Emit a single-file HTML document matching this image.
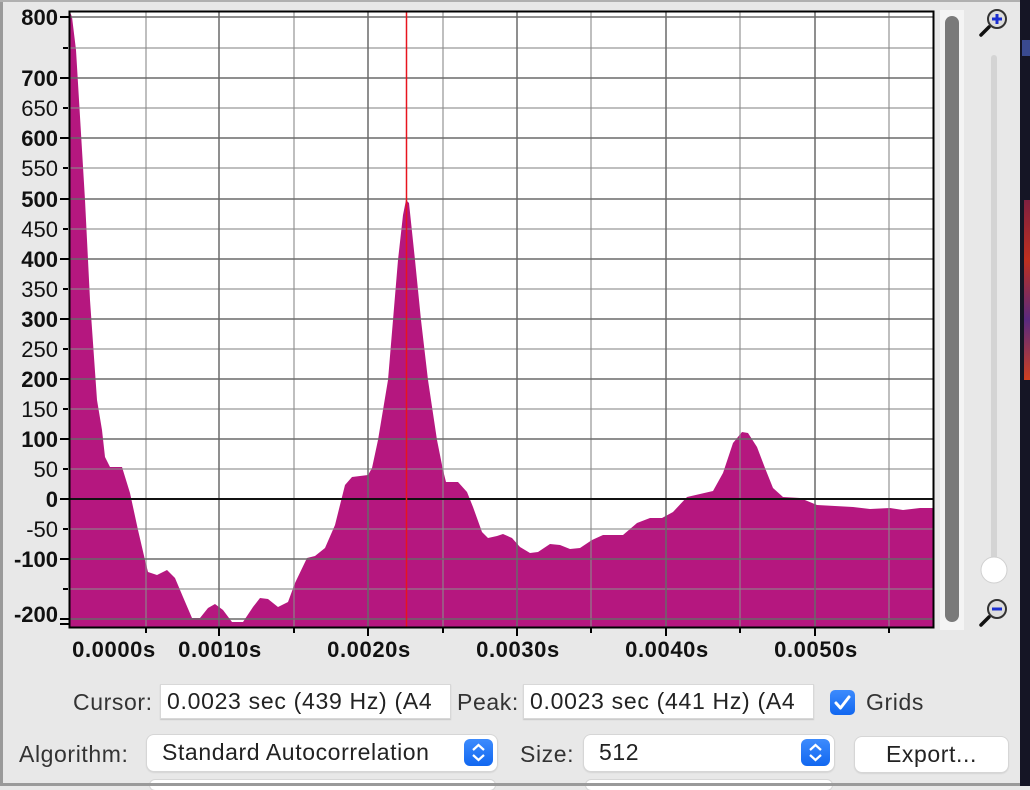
<!DOCTYPE html>
<html><head><meta charset="utf-8"><style>
html,body{margin:0;padding:0;}
body{width:1030px;height:786px;background:#e8e8e8;position:relative;overflow:hidden;font-family:"Liberation Sans",Arial,sans-serif;color:#222;}
.abs{position:absolute;}
.lab{font-size:23px;letter-spacing:0.6px;color:#333;}
.field{background:#fff;border:1px solid #d8d8d8;box-shadow:0 1px 1px rgba(0,0,0,.15);font-size:23px;letter-spacing:0.7px;color:#222;line-height:33px;padding-left:6px;box-sizing:border-box;white-space:nowrap;overflow:hidden;}
.pop{background:#fff;border-radius:7px;box-shadow:0 0 0 1px #d6d6d6,0 1px 2px rgba(0,0,0,.2);font-size:23px;letter-spacing:0.6px;line-height:34px;padding-left:15px;box-sizing:border-box;}
.stp{position:absolute;right:4px;top:4px;width:29px;height:27px;border-radius:6px;background:linear-gradient(#3d8bfd,#1167f0);}
</style></head><body>
<div class="abs" style="left:0;top:0;width:3px;height:786px;background:#9a9a9a"></div>
<div class="abs" style="left:0;top:0;width:1030px;height:2px;background:#b0b0b0"></div>
<div class="abs" style="left:1020px;top:0;width:10px;height:786px;background:#151525"></div>
<div class="abs" style="left:1022px;top:40px;width:8px;height:16px;background:#3a4a90"></div>
<div class="abs" style="left:1024px;top:200px;width:6px;height:180px;background:linear-gradient(#802040,#c03020,#5a2a80,#d04020)"></div>
<svg class="abs" style="left:0;top:0" width="1020" height="786">
<rect x="70" y="12" width="863" height="615" fill="#fff"/>
<polygon fill="#b5177f" points="70,12 72,17 76,50 79,100 82,150 85,200 90,300 97,400 102,430 105,457 110,467 122,467 130,493 138,530 145,560 148,572 157,575 167,570 175,578 183,597 192,618 200,618 208,608 215,604 223,610 232,622 243,622 253,607 260,598 268,599 278,607 288,602 295,583 307,558 315,556 325,548 335,525 345,485 352,477 368,475 372,468 378,440 383,410 388,380 393,320 398,260 403,215 406,200 409,203 415,260 421,320 428,380 437,440 443,470 446,482 458,482 467,492 473,507 482,532 488,538 497,536 503,534 512,538 520,547 530,553 538,552 550,544 560,545 570,549 580,548 592,540 603,535 623,535 637,523 650,518 662,518 673,512 687,497 700,494 713,491 723,473 733,443 742,432 748,433 757,447 765,468 773,488 783,497 800,498 817,505 853,507 870,509 890,508 903,510 920,508 933,508 933,627 70,627"/>
<g stroke="#8a8a8a" stroke-opacity="0.55" stroke-width="2">
<line x1="70" y1="48" x2="933" y2="48"/><line x1="70" y1="108" x2="933" y2="108"/><line x1="70" y1="168" x2="933" y2="168"/><line x1="70" y1="229" x2="933" y2="229"/><line x1="70" y1="289" x2="933" y2="289"/><line x1="70" y1="349" x2="933" y2="349"/><line x1="70" y1="409" x2="933" y2="409"/><line x1="70" y1="469" x2="933" y2="469"/><line x1="70" y1="529" x2="933" y2="529"/><line x1="70" y1="589" x2="933" y2="589"/>
<line x1="146" y1="12" x2="146" y2="627"/><line x1="294" y1="12" x2="294" y2="627"/><line x1="443" y1="12" x2="443" y2="627"/><line x1="591" y1="12" x2="591" y2="627"/><line x1="740" y1="12" x2="740" y2="627"/><line x1="889" y1="12" x2="889" y2="627"/>
</g>
<g stroke="#6a6a6a" stroke-opacity="0.75" stroke-width="2">
<line x1="70" y1="17" x2="933" y2="17"/><line x1="70" y1="78" x2="933" y2="78"/><line x1="70" y1="138" x2="933" y2="138"/><line x1="70" y1="199" x2="933" y2="199"/><line x1="70" y1="259" x2="933" y2="259"/><line x1="70" y1="319" x2="933" y2="319"/><line x1="70" y1="379" x2="933" y2="379"/><line x1="70" y1="439" x2="933" y2="439"/><line x1="70" y1="559" x2="933" y2="559"/><line x1="70" y1="619" x2="933" y2="619"/>
<line x1="219" y1="12" x2="219" y2="627"/><line x1="368" y1="12" x2="368" y2="627"/><line x1="517" y1="12" x2="517" y2="627"/><line x1="666" y1="12" x2="666" y2="627"/><line x1="815" y1="12" x2="815" y2="627"/>
</g>
<line x1="70" y1="499" x2="933" y2="499" stroke="#111" stroke-width="2"/>
<line x1="406.5" y1="12" x2="406.5" y2="627" stroke="#e8141e" stroke-width="1.5"/>
<rect x="69.5" y="11.5" width="864" height="616" fill="none" stroke="#000" stroke-width="2"/>
<g stroke="#000" stroke-width="2">
<line x1="60" y1="17" x2="69" y2="17"/><line x1="63" y1="48" x2="68" y2="48"/><line x1="60" y1="78" x2="69" y2="78"/><line x1="63" y1="108" x2="68" y2="108"/><line x1="60" y1="138" x2="69" y2="138"/><line x1="63" y1="168" x2="68" y2="168"/><line x1="60" y1="199" x2="69" y2="199"/><line x1="63" y1="229" x2="68" y2="229"/><line x1="60" y1="259" x2="69" y2="259"/><line x1="63" y1="289" x2="68" y2="289"/><line x1="60" y1="319" x2="69" y2="319"/><line x1="63" y1="349" x2="68" y2="349"/><line x1="60" y1="379" x2="69" y2="379"/><line x1="63" y1="409" x2="68" y2="409"/><line x1="60" y1="439" x2="69" y2="439"/><line x1="63" y1="469" x2="68" y2="469"/><line x1="60" y1="499" x2="69" y2="499"/><line x1="63" y1="529" x2="68" y2="529"/><line x1="60" y1="559" x2="69" y2="559"/><line x1="63" y1="589" x2="68" y2="589"/><line x1="60" y1="619" x2="69" y2="619"/><line x1="60" y1="624" x2="69" y2="624"/>
<line x1="146" y1="628" x2="146" y2="633"/><line x1="219" y1="628" x2="219" y2="636"/><line x1="294" y1="628" x2="294" y2="633"/><line x1="368" y1="628" x2="368" y2="636"/><line x1="443" y1="628" x2="443" y2="633"/><line x1="517" y1="628" x2="517" y2="636"/><line x1="591" y1="628" x2="591" y2="633"/><line x1="666" y1="628" x2="666" y2="636"/><line x1="740" y1="628" x2="740" y2="633"/><line x1="815" y1="628" x2="815" y2="636"/><line x1="889" y1="628" x2="889" y2="633"/>
</g>
<g font-family="Liberation Sans, Arial, sans-serif" font-size="22" text-anchor="end" fill="#111">
<text x="58" y="25" font-weight="bold">800</text>
<text x="58" y="86" font-weight="bold">700</text><text x="58" y="116">650</text>
<text x="58" y="146" font-weight="bold">600</text><text x="58" y="176">550</text>
<text x="58" y="207" font-weight="bold">500</text><text x="58" y="237">450</text>
<text x="58" y="267" font-weight="bold">400</text><text x="58" y="297">350</text>
<text x="58" y="327" font-weight="bold">300</text><text x="58" y="357">250</text>
<text x="58" y="387" font-weight="bold">200</text><text x="58" y="417">150</text>
<text x="58" y="447" font-weight="bold">100</text><text x="58" y="477">50</text>
<text x="58" y="507" font-weight="bold">0</text><text x="58" y="537">-50</text>
<text x="58" y="567" font-weight="bold">-100</text>
<text x="58" y="622" font-weight="bold">-200</text>
</g>
<g font-family="Liberation Sans, Arial, sans-serif" font-size="22" font-weight="bold" text-anchor="middle" fill="#111" letter-spacing="0.6">
<text x="114" y="657">0.0000s</text><text x="220" y="657">0.0010s</text><text x="369" y="657">0.0020s</text><text x="518" y="657">0.0030s</text><text x="667" y="657">0.0040s</text><text x="816" y="657">0.0050s</text>
</g>
<rect x="940" y="10" width="24" height="620" fill="#f4f4f4"/>
<rect x="945" y="16" width="14" height="606" rx="7" fill="#7a7a7a"/>
<rect x="991" y="55" width="6" height="510" rx="3" fill="#d4d4d4"/>
<circle cx="994" cy="570" r="13" fill="#fff" stroke="#d0d0d0"/>
<g>
<line x1="981" y1="35" x2="989" y2="27" stroke="#111" stroke-width="3.5" stroke-linecap="round"/>
<circle cx="997" cy="19" r="9" fill="#ddd" stroke="#333" stroke-width="2"/>
<path d="M992 19h10M997 14v10" stroke="#1a2ed0" stroke-width="3"/>
<line x1="981" y1="625" x2="989" y2="617" stroke="#111" stroke-width="3.5" stroke-linecap="round"/>
<circle cx="997" cy="609" r="9" fill="#ddd" stroke="#333" stroke-width="2"/>
<path d="M992 609h10" stroke="#1a2ed0" stroke-width="3"/>
</g>
</svg>
<div class="abs lab" style="left:73px;top:689px">Cursor:</div>
<div class="abs field" style="left:160px;top:684px;width:291px;height:35px">0.0023 sec (439 Hz) (A4</div>
<div class="abs lab" style="left:457px;top:689px">Peak:</div>
<div class="abs field" style="left:523px;top:684px;width:291px;height:35px">0.0023 sec (441 Hz) (A4</div>
<div class="abs" style="left:830px;top:690px;width:25px;height:25px;border-radius:5px;background:linear-gradient(#3d8bfd,#1167f0)"><svg width="25" height="25"><path d="M6 13l4.5 5L19 7" stroke="#fff" stroke-width="3" fill="none" stroke-linecap="round" stroke-linejoin="round"/></svg></div>
<div class="abs lab" style="left:866px;top:689px">Grids</div>
<div class="abs lab" style="left:19px;top:741px">Algorithm:</div>
<div class="abs pop" style="left:147px;top:735px;width:350px;height:36px">Standard Autocorrelation<div class="stp"><svg width="29" height="27"><path d="M9 11l5.5-5 5.5 5M9 16l5.5 5 5.5-5" stroke="#fff" stroke-width="2.2" fill="none"/></svg></div></div>
<div class="abs lab" style="left:520px;top:741px">Size:</div>
<div class="abs pop" style="left:584px;top:735px;width:250px;height:36px">512<div class="stp"><svg width="29" height="27"><path d="M9 11l5.5-5 5.5 5M9 16l5.5 5 5.5-5" stroke="#fff" stroke-width="2.2" fill="none"/></svg></div></div>
<div class="abs pop" style="left:855px;top:737px;width:153px;height:35px;text-align:center;padding-left:0;">Export...</div>
<div class="abs" style="left:150px;top:780px;width:345px;height:10px;background:#fff;border-radius:7px;box-shadow:0 0 0 1px #d6d6d6"></div>
<div class="abs" style="left:586px;top:780px;width:246px;height:10px;background:#fff;border-radius:7px;box-shadow:0 0 0 1px #d6d6d6"></div>
<div class="abs" style="left:0;top:783px;width:1020px;height:3px;background:#9a9a9a"></div>
</body></html>
